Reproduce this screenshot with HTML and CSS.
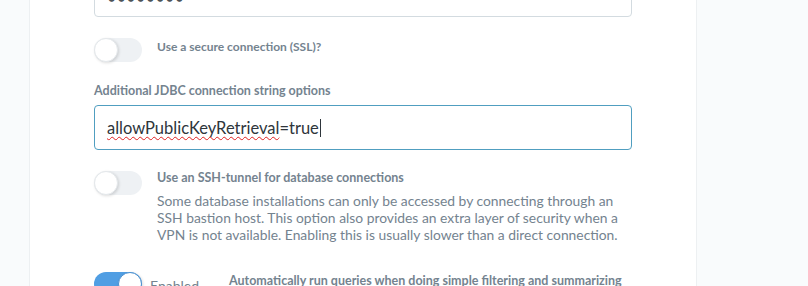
FILE: index.html
```html
<!DOCTYPE html>
<html>
<head>
<meta charset="utf-8">
<link rel="stylesheet" href="styles.css">
</head>
<body>
<div class="page">
  <div class="card">
    <div class="content">
      <div class="input pw">••••••••</div>

      <div class="toggle-row row-ssl">
        <span class="toggle"><span class="knob"></span></span>
        <div class="toggle-text">
          <div class="toggle-title">Use a secure connection (SSL)?</div>
        </div>
      </div>

      <div class="field">
        <div class="field-label">Additional JDBC connection string options</div>
        <div class="input focused"><span class="typo">allowPublicKeyRetrieval</span>=true<span class="caret"></span></div>
      </div>

      <div class="toggle-row row-ssh">
        <span class="toggle"><span class="knob"></span></span>
        <div class="toggle-text">
          <div class="toggle-title">Use an SSH-tunnel for database connections</div>
          <div class="toggle-desc">Some database installations can only be accessed by connecting through an SSH bastion host. This option also provides an extra layer of security when a VPN is not available. Enabling this is usually slower than a direct connection.</div>
        </div>
      </div>

      <div class="toggle-row row-auto">
        <span class="toggle on"><span class="knob"></span></span>
        <span class="toggle-state">Enabled</span>
        <div class="toggle-text">
          <div class="toggle-title">Automatically run queries when doing simple filtering and summarizing</div>
        </div>
      </div>
    </div>
  </div>
</div>
</body>
</html>
```

FILE: styles.css
```css
html, body {
  margin: 0;
  padding: 0;
  height: 100%;
  overflow: hidden;
}
body {
  background: #f9fbfc;
  font-family: Lato, "Open Sans", sans-serif;
  color: #74838f;
}
.page {
  height: 100%;
  padding-left: 29px;
}
.card {
  display: flow-root;
  width: 666px;
  height: 100%;
  background: #fff;
  border-left: 1px solid #edf0f2;
  border-right: 1px solid #edf0f2;
}
.content {
  padding-left: 64px;
  margin-top: -29px;
}
.input {
  box-sizing: border-box;
  width: 538px;
  height: 46px;
  border: 1px solid #d3dbe0;
  border-radius: 4px;
  padding: 0 12px;
  display: flex;
  align-items: center;
  font-size: 16.5px;
  color: #2e353b;
}
.input.pw {
  align-items: flex-end;
  padding-bottom: 9px;
  letter-spacing: 0.4px;
  font-size: 16px;
  color: #4c5358;
}
.input.focused {
  border-color: #509ec0;
  height: 45px;
}
.typo {
  text-decoration: underline wavy #e02020;
  text-decoration-thickness: 1px;
  text-underline-offset: 2px;
  text-decoration-skip-ink: none;
}
.caret {
  display: inline-block;
  width: 1px;
  height: 18px;
  background: #2e353b;
  margin-left: 1px;
}
.toggle-row {
  display: flex;
  align-items: flex-start;
}
.row-ssl { margin-top: 21px; }
.row-ssh { margin-top: 21px; }
.row-auto { margin-top: 29px; }
.toggle {
  flex: none;
  position: relative;
  width: 48px;
  height: 24px;
  border-radius: 12px;
  background: #eef1f4;
}
.toggle .knob {
  position: absolute;
  left: 0;
  top: 0;
  width: 22px;
  height: 22px;
  border-radius: 50%;
  background: #fff;
  border: 1px solid #e4e8eb;
  box-shadow: 1px 1px 3px rgba(0,0,0,0.14);
}
.toggle.on {
  background: #509ee3;
}
.toggle.on .knob {
  left: auto;
  right: 0;
  border-color: #4a90d0;
}
.toggle-text {
  margin-left: 15px;
}
.toggle-title {
  font-size: 12.5px;
  font-weight: 700;
  line-height: 16px;
  margin-top: 1px;
}
.row-ssl .toggle-title {
  font-size: 12px;
}
.row-ssh .toggle-title {
  margin-top: -1px;
}
.toggle-desc {
  font-size: 13.85px;
  line-height: 17px;
  margin-top: 6px;
  width: 470px;
}
.toggle-state {
  font-size: 14px;
  margin-left: 8px;
  margin-top: 5px;
  width: 72px;
  flex: none;
}
.row-auto .toggle-text { margin-left: 7px; }
.field {
  margin-top: 21px;
}
.field-label {
  font-size: 12.5px;
  font-weight: 700;
  line-height: 16px;
  margin-bottom: 6px;
}
```
